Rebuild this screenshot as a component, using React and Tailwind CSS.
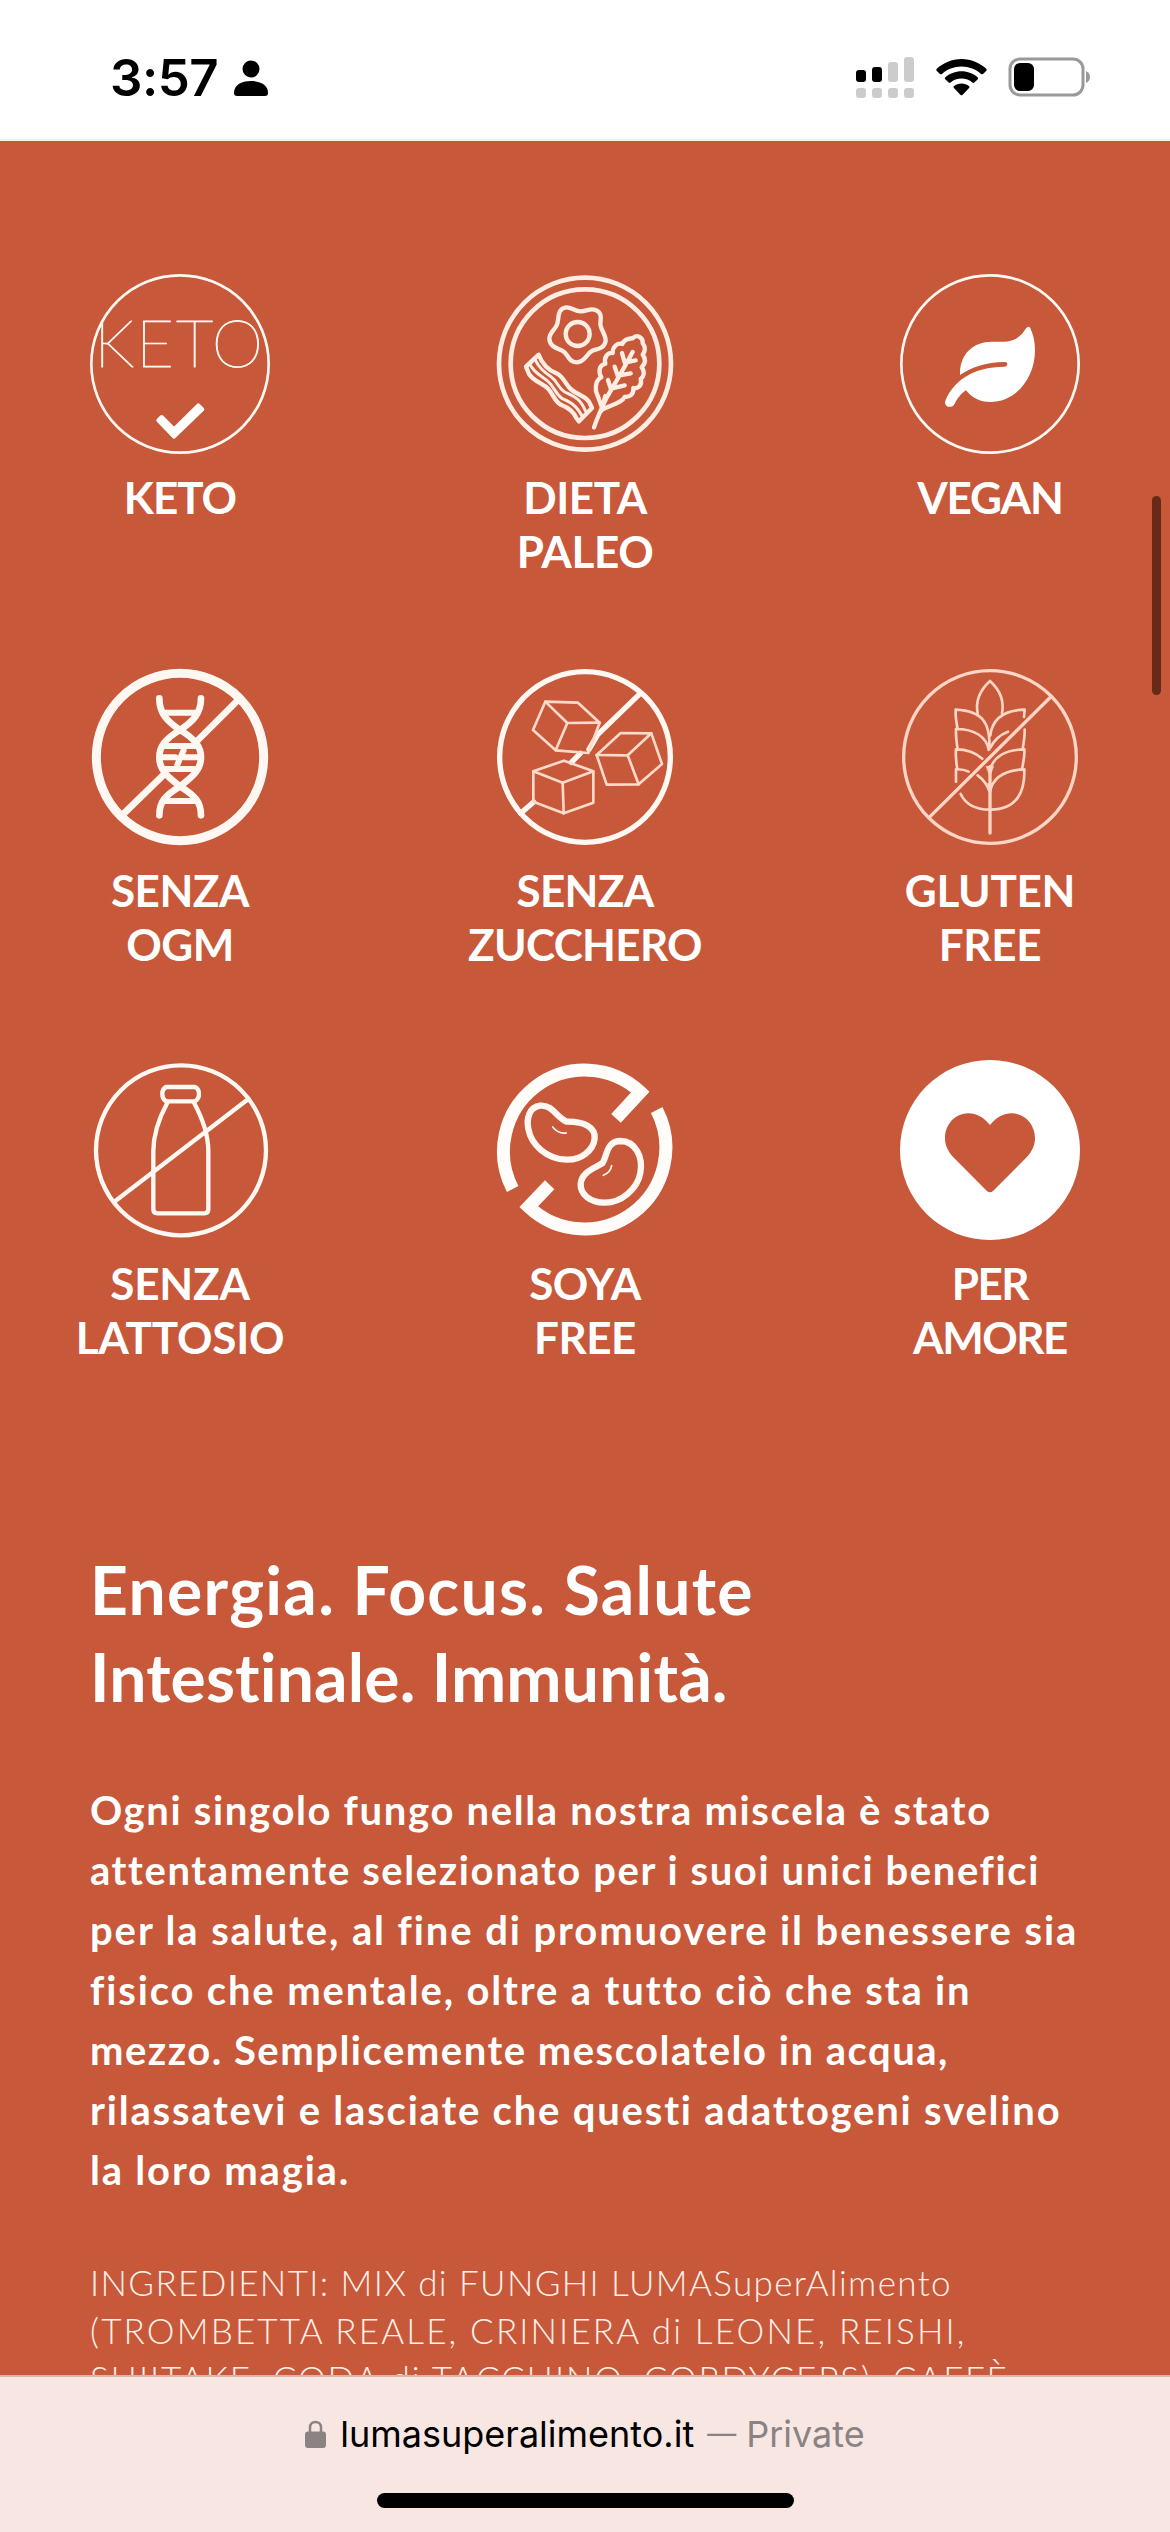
import React from "react";

const Badge = ({ viewBox, children }) => (
  <svg
    className="block h-[180px] w-[180px]"
    viewBox={viewBox}
    fill="none"
    stroke="#fff8f2"
    strokeLinecap="round"
    strokeLinejoin="round"
  >
    {children}
  </svg>
);

const KetoIcon = () => (
  <Badge viewBox="90 72 540 540">
    <circle cx="360" cy="342" r="266" strokeWidth="8" />
    <text
      x="103"
      y="351"
      fill="#fff8f2"
      strokeWidth="3"
      fontSize="196"
      textLength="506"
      className="font-['Lato'] font-thin"
    >
      KETO
    </text>
    <path
      d="M295 511 L305 501 L342 538 L415 466 L427 478 L342 560 Z"
      fill="#fff"
      stroke="#fff"
      strokeWidth="12"
    />
  </Badge>
);

const PaleoIcon = () => (
  <Badge viewBox="105 72 540 540">
    <g strokeWidth="14" stroke="#ffede3">
      <circle cx="375" cy="341" r="258" />
      <circle cx="375" cy="341" r="223" />
      <g strokeWidth="13">
        <path d="M318 172 C335 171 344 184 362 184 C382 184 390 173 407 180 C426 188 423 204 421 220 C420 236 437 252 437 272 C435 295 413 297 397 302 C380 309 377 336 350 337 C323 336 325 310 307 302 C291 295 269 290 268 266 C268 247 288 237 292 221 C297 202 292 176 318 172 Z" />
        <circle cx="353" cy="252" r="36" />
        <path d="M236 314 L198 350 L207 372 C224 397 248 399 266 418 C283 438 284 456 306 466 C327 474 340 485 349 504 L357 514 L396 474 L387 455 C370 432 346 434 329 414 C313 397 308 377 289 370 C265 360 248 345 236 314 Z" />
        <path
          d="M224 326 C236 354 254 367 273 380 C292 393 292 412 314 426 C337 438 359 441 376 482 M209 342 C225 373 249 379 266 396 C285 414 286 432 307 446 C330 456 349 465 366 498"
          strokeWidth="9"
        />
        <path d="M428 478 L408 424 C406 402 409 388 424 382 C413 363 419 345 436 341 C431 323 442 307 458 309 C458 290 472 277 487 282 C494 263 513 267 519 264 C530 252 550 262 548 280 C558 291 555 306 548 314 C560 329 554 343 545 352 C556 366 551 380 542 387 C548 407 532 417 520 414 C522 435 508 441 494 441 C487 457 459 463 428 478 Z" />
        <path d="M402 532 C413 500 425 474 440 443 C462 405 488 362 518 306 M444 390 L453 418 M436 438 L424 482 M464 350 L475 383 M486 309 L496 344 M454 416 L494 406 M475 377 L512 370 M497 337 L527 331" />
      </g>
    </g>
  </Badge>
);

const VeganIcon = () => (
  <Badge viewBox="120 72 540 540">
    <circle cx="390" cy="342" r="266" strokeWidth="8" />
    <path
      d="M300 375 C298 312 340 275 395 275 H430 C465 275 485 258 498 235 Q505 226 511 234 C520 255 525 275 525 300 C525 388 465 456 390 456 C360 456 335 443 318 421 C300 433 292 447 284 461 Q277 473 263 470 Q252 465 256 452 C280 395 335 350 435 350 Q442 349 442 343 Q442 336 435 336 C375 337 335 352 300 375 Z"
      fill="#fff"
      stroke="none"
    />
  </Badge>
);

const NoGmoIcon = () => (
  <Badge viewBox="90 51 540 540">
    <circle cx="360" cy="321" r="251" strokeWidth="27" />
    <g strokeWidth="20">
      <path d="M530 154 L414 270 M307 378 L190 492" />
      <path d="M298 145 C298 190 320 213 360 240 C405 267 423 290 423 322 C423 360 396 382 360 409 C313 438 298 456 298 496" />
      <path d="M423 145 C423 190 400 213 360 240 C315 267 298 290 298 322 C298 360 324 382 360 409 C407 438 423 456 423 496" />
      <path
        d="M315 188 H405 M310 288 H412 M303 322 H346 M372 322 H418 M310 357 H412 M317 453 H404 M371 301 L352 344"
        strokeWidth="18"
      />
    </g>
  </Badge>
);

const NoSugarIcon = () => (
  <Badge viewBox="135 51 540 540">
    <circle cx="405" cy="321" r="256" strokeWidth="16" />
    <path
      d="M570 131 L443 254 L417 298 M391 310 L364 337 M251 456 L212 490"
      strokeWidth="16"
    />
    <g strokeWidth="8" stroke="#ffd9c9">
      <path d="M286 155 L384 158 L449 218 L415 309 L317 301 L249 240 Z" />
      <path d="M286 155 L352 219 L317 301 M352 219 L449 218" />
      <path d="M250 364 L342 332 L430 364 V458 L341 490 L250 455 Z" />
      <path d="M250 364 L338 398 L430 364 M338 398 L341 490" />
      <path d="M440 315 L512 249 L604 250 L636 342 L566 403 L470 404 Z" />
      <path d="M440 315 L533 316 L604 250 M533 316 L566 403" />
    </g>
  </Badge>
);

const GlutenIcon = () => (
  <Badge viewBox="90 51 540 540">
    <g stroke="#ffd5c5" strokeWidth="8">
      <circle cx="360" cy="321" r="259" strokeWidth="10" />
      <path d="M542 141 L180 500" strokeWidth="10" />
      <path d="M323 190 C315 149 336 115 360 93 C384 115 404 149 396 190" />
      <path d="M358 298 C362 218 338 183 257 179 C256 200 259 218 263 237 M258 237 C313 237 350 260 356 300 M258 237 C257 263 260 279 263 298" />
      <path d="M361 256 C367 208 399 181 464 179 L462 201 M361 293 C373 269 387 255 414 245 M464 239 C465 265 460 278 458 298" />
      <path d="M258 298 C294 298 318 309 337 326 M258 298 C256 322 259 339 262 358 M360 360 C371 319 403 300 463 298 M463 298 C465 320 459 339 456 358" />
      <path d="M258 358 C276 357 286 360 296 365 M258 358 V395 M323 376 C341 389 352 406 358 423 M360 423 C370 382 403 360 463 358 C465 422 443 480 360 479 C315 479 286 461 272 432" />
      <path d="M360 350 V549" strokeWidth="10" />
      <path d="M349 349 H371 L360 378 Z M353 400 L360 436 L368 400" fill="#ffd5c5" strokeWidth="2" />
    </g>
  </Badge>
);

const NoMilkIcon = () => (
  <Badge viewBox="90 60 540 540">
    <g strokeWidth="13">
      <circle cx="363" cy="331" r="255" />
      <path d="M564 178 L163 485" />
      <path d="M318 141 H405 C421 149 421 174 405 184 H318 C303 174 303 149 318 141 Z" />
      <path d="M322 188 C291 245 280 287 280 334 V508 Q280 520 292 520 H433 Q445 520 445 508 V334 C445 287 433 245 402 188" />
    </g>
  </Badge>
);

const NoSoyIcon = () => (
  <Badge viewBox="105 60 540 540">
    <g strokeLinecap="butt" strokeLinejoin="miter" strokeWidth="39" stroke="#fffcfa">
      <path d="M158 447 A244 244 0 0 1 541 156 L468 235" />
      <path d="M590 210 A244 244 0 0 1 206 500 L269 434" />
    </g>
    <path
      d="M321 245 C289 233 278 194 241 197 C207 201 199 236 205 267 C214 315 260 357 319 359 C362 361 400 332 404 296 C407 262 372 244 321 245 Z"
      strokeWidth="19"
    />
    <path
      d="M427 370 C442 349 438 303 482 303 C526 304 550 350 541 399 C532 448 482 489 434 488 C391 487 360 464 362 431 C365 397 400 386 427 370 Z"
      strokeWidth="19"
    />
    <path d="M278 261 Q296 283 319 279 M455 377 Q452 397 430 406" strokeWidth="5" />
  </Badge>
);

const LoveIcon = () => (
  <Badge viewBox="90 60 540 540">
    <circle cx="360" cy="330" r="270" fill="#fff" stroke="none" />
    <path
      d="M360 255 C380 232 400 220 425 220 C465 220 495 254 495 295 C495 315 487 334 470 352 L370 452 Q360 462 350 452 L250 352 C233 334 225 315 225 295 C225 254 255 220 295 220 C320 220 340 232 360 255 Z"
      fill="#c8583a"
      stroke="none"
    />
  </Badge>
);

const features = [
  { Icon: KetoIcon, lines: ["KETO"], tracking: "tracking-[-1px]" },
  { Icon: PaleoIcon, lines: ["DIETA", "PALEO"], tracking: "tracking-[-0.4px]" },
  { Icon: VeganIcon, lines: ["VEGAN"], tracking: "tracking-[-1.1px]" },
  { Icon: NoGmoIcon, lines: ["SENZA", "OGM"], tracking: "tracking-[-0.5px]" },
  { Icon: NoSugarIcon, lines: ["SENZA", "ZUCCHERO"], tracking: "tracking-[-0.7px]" },
  { Icon: GlutenIcon, lines: ["GLUTEN", "FREE"], tracking: "tracking-[-0.3px]" },
  { Icon: NoMilkIcon, lines: ["SENZA", "LATTOSIO"], tracking: "tracking-[-0.2px]" },
  { Icon: NoSoyIcon, lines: ["SOYA", "FREE"], tracking: "tracking-[-0.5px]" },
  { Icon: LoveIcon, lines: ["PER", "AMORE"], tracking: "tracking-[-1.5px]" },
];

const StatusBar = () => (
  <header className="flex h-[141px] shrink-0 items-start justify-between border-b-2 border-[#f3eeea] bg-white pl-[110px] pr-[79px] pt-[56px] text-black">
    <div className="flex items-start">
      <span className="font-['Inter'] text-[51px] font-semibold leading-[44px] tracking-[-0.5px]">
        3:57
      </span>
      <svg className="ml-4 mt-1 h-9 w-[34px]" viewBox="0 0 34 36">
        <circle cx="17" cy="9" r="8.5" />
        <path d="M0 33 C0 25 7 21 17 21 C27 21 34 25 34 33 Q34 36 31 36 H3 Q0 36 0 33 Z" />
      </svg>
    </div>
    <div className="flex items-start">
      <svg className="h-[43px] w-[59px]" viewBox="0 0 59 43">
        <rect x="0" y="14" width="10" height="12" rx="3" />
        <rect x="16" y="11" width="10" height="15" rx="3" />
        <g fill="#cccccc">
          <rect x="32" y="6" width="10" height="20" rx="3" />
          <rect x="48" y="1" width="10" height="25" rx="3" />
          <rect x="0" y="32" width="10" height="10" rx="3" />
          <rect x="16" y="32" width="10" height="10" rx="3" />
          <rect x="32" y="32" width="10" height="10" rx="3" />
          <rect x="48" y="32" width="10" height="10" rx="3" />
        </g>
      </svg>
      <svg className="ml-[21px] mt-[3px] h-[37px] w-[51px]" viewBox="0 0 51 37">
        <path d="M25.5 0 C35 0 44 4 50.5 10 Q51 11 50.4 11.7 L47 15 Q46 15.6 45 15 C40 10.4 33 7.6 25.5 7.6 C18 7.6 11 10.4 6 15 Q5 15.6 4 15 L.6 11.7 Q0 11 .5 10 C7 4 16 0 25.5 0 Z" />
        <path d="M25.5 12.3 C31.7 12.3 37.4 14.6 41.8 18.5 Q42.6 19.3 41.8 20.2 L38.3 23.6 Q37.4 24.3 36.5 23.6 C33.5 21 29.7 19.5 25.5 19.5 C21.3 19.5 17.5 21 14.5 23.6 Q13.6 24.3 12.7 23.6 L9.2 20.2 Q8.4 19.3 9.2 18.5 C13.6 14.6 19.3 12.3 25.5 12.3 Z" />
        <path d="M25.5 24.5 C28.4 24.5 31 25.5 33.1 27.2 Q33.9 28.1 33.1 29 L26.4 36 Q25.5 36.7 24.6 36 L17.9 29 Q17.1 28.1 17.9 27.2 C20 25.5 22.6 24.5 25.5 24.5 Z" />
      </svg>
      <svg className="ml-[21px] mt-[1px] h-[40px] w-[83px]" viewBox="0 0 83 40">
        <rect x="2" y="2" width="73" height="36" rx="10" fill="none" stroke="#999" strokeWidth="3" />
        <rect x="6" y="6" width="20" height="28" rx="6" />
        <path d="M78 14 Q82 16 82 20 Q82 24 78 26 Z" fill="#999" />
      </svg>
    </div>
  </header>
);

export default function App() {
  return (
    <div className="relative flex h-[2532px] w-[1170px] flex-col overflow-hidden bg-[#c8583a]">
      <StatusBar />
      <main className="min-h-0 flex-1 overflow-hidden px-[90px] pt-[133px] font-['Lato'] text-white">
        <section className="grid grid-cols-[180px_180px_180px] justify-between">
          {features.map(({ Icon, lines, tracking }, index) => (
            <div key={index} className="flex h-[393px] flex-col items-center">
              <Icon />
              <div
                className={`mt-4 whitespace-nowrap text-center text-[44px] font-bold leading-[54px] ${tracking}`}
              >
                {lines.map((line) => (
                  <div key={line}>{line}</div>
                ))}
              </div>
            </div>
          ))}
        </section>

        <h2 className="mt-[93px] whitespace-nowrap text-[66px] font-bold leading-[87px]">
          <span className="block tracking-[1.3px]">Energia. Focus. Salute</span>
          <span className="block tracking-[0.15px]">Intestinale. Immunità.</span>
        </h2>

        <p className="mt-[60px] whitespace-nowrap text-[40px] font-bold leading-[60px]">
          <span className="block tracking-[1.65px]">Ogni singolo fungo nella nostra miscela è stato</span>
          <span className="block tracking-[1.6px]">attentamente selezionato per i suoi unici benefici</span>
          <span className="block tracking-[1.9px]">per la salute, al fine di promuovere il benessere sia</span>
          <span className="block tracking-[1.85px]">fisico che mentale, oltre a tutto ciò che sta in</span>
          <span className="block tracking-[1.5px]">mezzo. Semplicemente mescolatelo in acqua,</span>
          <span className="block tracking-[1.8px]">rilassatevi e lasciate che questi adattogeni svelino</span>
          <span className="block tracking-[1.8px]">la loro magia.</span>
        </p>

        <p className="mt-[58px] whitespace-nowrap text-[35px] font-light leading-[48px] text-[#fff1e8]">
          <span className="block tracking-[1.38px]">INGREDIENTI: MIX di FUNGHI LUMASuperAlimento</span>
          <span className="block tracking-[2.15px]">(TROMBETTA REALE, CRINIERA di LEONE, REISHI,</span>
          <span className="block tracking-[1.9px]">SHIITAKE, CODA di TACCHINO, CORDYCEPS), CAFFÈ</span>
        </p>
      </main>

      <footer className="flex h-[157px] shrink-0 flex-col items-center border-t-2 border-[#dcb5aa] bg-[#f8e6e2] pt-[33px] font-['Inter']">
        <div className="flex h-[48px] items-center whitespace-nowrap text-[36px] leading-[48px]">
          <svg className="mr-[14px] h-[28px] w-[21px]" viewBox="0 0 21 28" fill="none">
            <path d="M5 12 V7.5 C5 0 16 0 16 7.5 V12" stroke="#8a8283" strokeWidth="2.5" />
            <rect x="0" y="11.5" width="21" height="16.5" rx="3" fill="#8a8283" />
          </svg>
          <span className="text-black">lumasuperalimento.it</span>
          <span className="ml-[13px] flex gap-[10px] text-[#8a8283]">
            <span className="text-[29px]">—</span>
            <span>Private</span>
          </span>
        </div>
        <div className="mt-[35px] h-[15px] w-[417px] rounded-full bg-black" />
      </footer>

      {/* scroll indicator */}
      <div className="absolute left-[1152px] top-[496px] h-[199px] w-[9px] rounded-full bg-[#652b18]" />
    </div>
  );
}
